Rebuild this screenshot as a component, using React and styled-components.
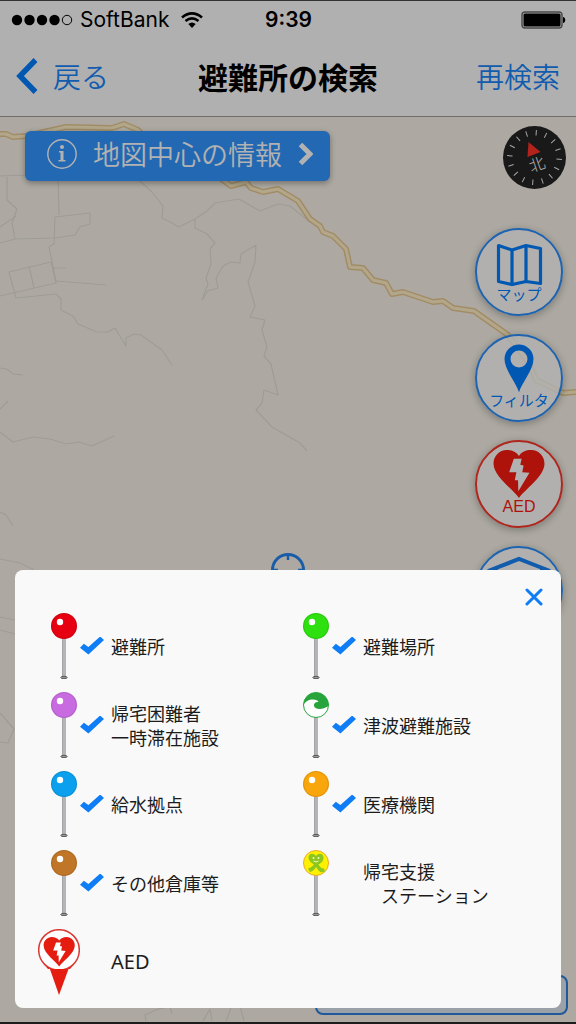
import React from "react";
import styled, { createGlobalStyle } from "styled-components";

const GlobalStyle = createGlobalStyle`
  * {
    box-sizing: border-box;
  }
  body {
    margin: 0;
    font-family: "Noto Sans CJK JP", sans-serif;
    background: #fdfdfd;
  }
  button {
    font-family: inherit;
    border: none;
    background: none;
    padding: 0;
    cursor: pointer;
  }
  svg {
    display: block;
    flex-shrink: 0;
  }
`;

const Screen = styled.div`
  min-height: 100vh;
  display: flex;
  flex-direction: column;
  border-top: 1px solid #4a4a4e;
  border-bottom: 2px solid #2c2a2c;
`;

const Header = styled.header`
  background: #fdfdfd;
  border-bottom: 1px solid #a09e98;
`;

const StatusBar = styled.div`
  display: grid;
  grid-template-columns: 1fr auto 1fr;
  align-items: center;
  height: 38px;
  padding: 0 10px 0 11px;
  font-family: Inter, sans-serif;
  font-size: 21px;
  line-height: 24px;
`;

const Carrier = styled.div`
  display: flex;
  align-items: center;
  gap: 7px;

  svg:last-child {
    margin-left: 5px;
  }
`;

const Clock = styled.time`
  font-weight: 600;
`;

const Battery = styled.div`
  display: flex;
  justify-content: flex-end;
`;

const NavBar = styled.nav`
  display: grid;
  grid-template-columns: 1fr auto 1fr;
  align-items: center;
  height: 77px;
  padding: 0 16px 4px;
`;

const Title = styled.h1`
  margin: 0;
  font-size: 30px;
  font-weight: 700;
  line-height: 40px;
`;

const NavButton = styled.button`
  display: flex;
  align-items: center;
  gap: 15px;
  justify-self: ${(props) => (props.$end ? "end" : "start")};
  color: #1a85fa;
  font-size: 28px;
  font-weight: 350;
  line-height: 40px;
`;

const MapArea = styled.main`
  flex: 1;
  position: relative;
  display: flex;
  flex-direction: column;
  justify-content: space-between;
  background: #f8f3e9;
`;

const MapCanvas = styled.svg`
  position: absolute;
  inset: 0;
  width: 100%;
  height: 100%;
`;

const Reticle = styled.svg`
  position: absolute;
  top: 50%;
  left: 50%;
  transform: translate(-50%, -50%);
`;

const Controls = styled.div`
  position: relative;
  display: flex;
  justify-content: space-between;
  align-items: flex-start;
  padding: 9px 10px 0 25px;
`;

const InfoButton = styled.button`
  display: flex;
  align-items: center;
  gap: 16px;
  height: 50px;
  margin-top: 5px;
  padding: 0 17px 4px 22px;
  border-radius: 6px;
  background: #3395ff;
  box-shadow: 0 2px 6px rgba(0, 0, 0, 0.35);
  color: #fff;
  font-size: 27px;
  font-weight: 350;
  line-height: 40px;
`;

const ControlColumn = styled.div`
  display: flex;
  flex-direction: column;
  align-items: flex-end;
  gap: 39px;
`;

const RoundButtons = styled.div`
  display: flex;
  flex-direction: column;
  gap: 18px;
  padding-right: 3px;
`;

const RoundButton = styled.button`
  display: flex;
  flex-direction: column;
  align-items: center;
  gap: 1px;
  width: 88px;
  height: 88px;
  padding-top: 8px;
  border: 2px solid ${(props) => (props.$red ? "#f8382c" : "#2c8ffb")};
  border-radius: 50%;
  background: rgba(255, 255, 255, 0.8);
  box-shadow: 0 2px 8px rgba(0, 0, 0, 0.3);
  color: ${(props) => (props.$red ? "#f81a10" : "#007fff")};
  font-family: "Liberation Sans", "Noto Sans CJK JP", sans-serif;
  font-size: ${(props) => (props.$red ? "16px" : "15px")};
  font-weight: 400;
  line-height: 16px;
`;

const BottomPanel = styled.div`
  position: relative;
  align-self: flex-end;
  width: 44%;
  height: 40px;
  margin: 0 8px 7px 0;
  border: 2px solid #2f80de;
  border-radius: 8px;
  background: rgba(214, 228, 242, 0.8);
`;

const Backdrop = styled.div`
  position: fixed;
  inset: 0;
  display: flex;
  align-items: flex-end;
  padding: 0 15px 16px;
  background: rgba(0, 0, 0, 0.3);
`;

const Dialog = styled.section`
  width: 100%;
  padding: 16px 19px 7px 23px;
  border-radius: 8px;
  background: #f9f9f9;
`;

const DialogTop = styled.div`
  display: flex;
  justify-content: flex-end;
`;

const CloseButton = styled.button`
  display: flex;
  align-items: flex-end;
  justify-content: center;
  width: 16px;
  height: 20px;
`;

const Legend = styled.ul`
  display: grid;
  grid-template-columns: 1fr 1fr;
  grid-auto-rows: 79px;
  margin: 0;
  padding: 0;
  list-style: none;
`;

const LegendItem = styled.li`
  display: flex;
`;

const LegendLabel = styled.label`
  display: flex;
  align-items: center;
  color: #1c1c1c;
  font-size: ${(props) => (props.$large ? "20px" : "18px")};
  font-family: ${(props) => (props.$large ? '"Noto Sans"' : '"Noto Sans CJK JP"')}, sans-serif;
  line-height: 24px;
  white-space: pre;
  cursor: pointer;
`;

const Check = styled.input`
  appearance: none;
  width: 24px;
  height: 18px;
  margin: 0 7px 0 0;
  clip-path: polygon(0 62%, 16% 40%, 35% 58%, 84% 0, 100% 20%, 35% 100%);
  cursor: pointer;

  &:checked {
    background: #0f7df5;
  }
`;

const HEART =
  "M27 49C22 41 1 27 1 14C1 6 7 0 14.500 0C20 0 24.500 2 27 6C29.500 2 34 0 39.500 0C47 0 53 6 53 14C53 27 32 41 27 49Z";
const BOLT =
  "21.7,9 29.7,9 28.3,15 31.7,15.7 30.3,22.7 37.7,23.3 26.3,42 26,31 22.7,31 24.3,22.7 17,22.7";

const SignalDots = () => (
  <svg width="62" height="12" viewBox="0 0 62 12">
    {[6, 18.5, 31, 43.5].map((x) => (
      <circle key={x} cx={x} cy="6" r="5.2" fill="#000" />
    ))}
    <circle cx="56" cy="6" r="4.7" fill="none" stroke="#000" />
  </svg>
);

const WifiIcon = () => (
  <svg width="22" height="16" viewBox="0 0 22 16" fill="none" stroke="#000" strokeWidth="2.6">
    <path d="M1 5.500Q11-2.700 21 5.500" />
    <path d="M4.500 9Q11 3.800 17.500 9" />
    <path d="M11 16L7.300 12Q11 9 14.700 12Z" fill="#000" stroke="none" />
  </svg>
);

const BatteryIcon = () => (
  <svg width="45" height="18" viewBox="0 0 45 18">
    <rect x="1" y="1" width="40" height="16" rx="3" fill="none" stroke="#666" strokeWidth="1.400" />
    <rect x="2.500" y="2.500" width="37" height="13" rx="1.500" fill="#000" />
    <path d="M42 6C45 6 45 12 42 12Z" fill="#000" />
  </svg>
);

const Compass = () => (
  <svg width="63" height="63" viewBox="-31.5 -31.5 63 63">
    <circle r="31.500" fill="#262524" />
    {Array.from({ length: 16 }, (_, i) => (
      <path key={i} d="M0-22V-27.500" stroke="#eee" transform={`rotate(${4 + i * 22.5})`} />
    ))}
    <path d="M-6-15.500L6-5.500L-7-0.500Z" fill="#ff3328" />
    <text
      x="0"
      y="13"
      textAnchor="middle"
      fontSize="16"
      fontWeight="300"
      fill="#fff"
      transform="rotate(-19)"
    >
      北
    </text>
  </svg>
);

const InfoIcon = () => (
  <svg width="30" height="30" viewBox="0 0 30 30" fill="#fff">
    <circle cx="15" cy="15" r="14.200" fill="none" stroke="#fff" strokeWidth="1.400" />
    <circle cx="15" cy="8" r="2" />
    <path d="M12 12H16.500V21H18.500V22.500H11.500V21H13.500V13.500H12Z" />
  </svg>
);

const MapIcon = () => (
  <svg width="54" height="48" fill="none" stroke="#007fff" strokeWidth="3.200" strokeLinejoin="round">
    <path d="M6.500 7.500L20 12L34 7.500L48.500 10.500V45.500L34 43.500L20 46.500L6.500 43.500Z" />
    <path d="M20 12V46M34 8V43" />
  </svg>
);

const FilterIcon = () => (
  <svg width="54" height="48" fill="#007fff">
    <path
      fillRule="evenodd"
      d="M27 48.500C25 40 12.500 26 12.500 15A14.500 14.500 0 0 1 41.500 15C41.500 26 29 40 27 48.500ZM27 6.500A8.500 8.500 0 1 0 27 23.500A8.500 8.500 0 1 0 27 6.500Z"
    />
  </svg>
);

const HeartIcon = () => (
  <svg width="54" height="48" viewBox="0 0 54 49" fill="#f81a10">
    <path d={HEART} />
    <polygon points={BOLT} fill="#fff" />
  </svg>
);

const HomeIcon = () => (
  <svg width="70" height="48" fill="none" stroke="#1a85fa" strokeWidth="4">
    <path d="M4 15L35 3L66 15M12 13V46H58V13" />
  </svg>
);

const PinStem = () => (
  <>
    <rect x="24.500" y="25" width="3.500" height="39" fill="#b3b5b8" />
    <path d="M24.500 25V64" stroke="#a3a5a8" />
    <ellipse cx="26" cy="64.500" rx="3.200" ry="1.200" fill="#999" stroke="#444" strokeWidth="0.800" />
  </>
);

const PinIcon = ({ type, color }) => {
  if (type === "aed") {
    return (
      <svg width="42" height="66" viewBox="0 0 42 66">
        <path d="M10.500 36H32L21 66Z" fill="#e51c10" />
        <circle cx="21" cy="21" r="20.300" fill="#fff" stroke="#d93a33" strokeWidth="1.500" />
        <path d="M5 34A20 20 0 0 0 37 34L32 40H10Z" fill="#e51c10" />
        <circle cx="21" cy="21" r="18.800" fill="#fff" />
        <g transform="translate(5 8) scale(0.6)">
          <path d={HEART} fill="#e51c10" />
          <polygon points={BOLT} fill="#fff" />
        </g>
      </svg>
    );
  }
  return (
    <svg width="42" height="66" viewBox="0 0 42 66">
      <PinStem />
      {type === "ball" && (
        <>
          <circle cx="26" cy="13" r="13" fill={color} />
          <circle cx="26" cy="13" r="12.500" fill="none" stroke="#000" strokeOpacity="0.120" />
          <circle cx="22" cy="9" r="3.200" fill="#fff" />
        </>
      )}
      {type === "wave" && (
        <>
          <circle cx="26" cy="13" r="12.500" fill="#fff" stroke="#27a53c" />
          <path
            d="M13.500 13C15 9.500 19 7.500 23 7.500C26 7.500 28 8.500 28.500 10C25.500 9.500 23.500 11.500 24 14C25 17.500 32 18.500 38.500 14C39 6 33 0.500 26 0.500C19 0.500 13.500 6 13.500 13Z"
            fill="#27a53c"
          />
        </>
      )}
      {type === "support" && (
        <>
          <circle cx="26" cy="13" r="12.500" fill="#fdf100" stroke="#eba92c" />
          <path
            d="M26 6C23 2 18 4 18.500 8C19 11.500 22 13 24 14.500C22 17 20 18 18 18.500L20 22C23 21.500 25 19 26 17C27.500 19 29 21.500 31 22.500L35 21.500L34 18.500C31.500 18.500 30 17 28.500 14.500C31 13 33.500 11.500 33.500 8C34 4 29 2 26 6Z"
            fill="#8cc61e"
          />
          <circle cx="23.500" cy="8" r="1" fill="#f4f9c0" />
          <circle cx="28.500" cy="8" r="1" fill="#f4f9c0" />
          <path d="M23.500 11Q26 13 28.500 11" fill="none" stroke="#f4f9c0" />
        </>
      )}
    </svg>
  );
};

const mainRoad =
  "M0 134L6 134L13 137L26 136L48 131L66 127L112 128L124 124L138 130L150 142L180 162L207 171L219 177L231 186L246 182L251 188L263 192L278 189L298 201L310 219L320 226L323 232L333 236L346 249L350 267L363 268L373 280L386 283L392 294L403 292L433 302L443 301L453 308L474 311L508 335L529 363L536 380L563 393L576 392";

const paths = [
  "M0 176L57 174L108 176L140 181L152 192L163 206L162 218L170 222L179 227L195 219L207 211L215 203L239 199L260 211L278 204L290 206L300 214L310 222",
  "M7 177V200L17 209L12 223L15 239L55 238L75 235L80 227L90 224V213L55 217L54 244L49 247L56 281L106 285",
  "M58 174L59 215M0 227L16 216M0 243L15 239M53 268H66",
  "M0 296L56 283L51 262L9 272L16 298L56 294L61 299L61 310L73 316L78 324L97 332H108L115 328L126 346V338L134 334L141 335L162 350L172 365",
  "M29 266L34 288M0 368L7 369L13 374L23 375M0 409L8 401M0 432L13 442L33 437L50 439L66 444L79 442L92 446L114 436",
  "M195 219V228L207 234L215 243L210 249L211 264L206 278L208 284L202 300L208 291L218 288L216 278L223 266L231 262L240 263L241 254L256 245L255 262L248 282L255 306L250 317L265 320L262 330L267 347L264 356L271 364L278 395L264 390L262 403L256 410L272 427L300 443L307 451",
  "M0 512L6 515L13 526M0 559L20 563L34 570M0 617L15 620M0 630L15 634M0 713L14 729L8 743L0 742",
  "M146 1021L145 1015L158 1009L170 1007L172 1014M203 1021L210 1009L212 1021M226 1021L231 1008L240 1006L244 1021",
];

const MapDrawing = () => (
  <MapCanvas viewBox="0 117 576 905" preserveAspectRatio="xMidYMid slice">
    <g fill="none" strokeLinejoin="round">
      {paths.map((d) => (
        <path key={d} d={d} stroke="#e3dfd8" strokeWidth="1.200" />
      ))}
      <path d={mainRoad} stroke="#e8c993" strokeWidth="6" />
      <path d={mainRoad} stroke="#fff0c6" strokeWidth="3" />
    </g>
  </MapCanvas>
);

const legend = [
  { label: "避難所", type: "ball", color: "#e60012", checked: true },
  { label: "避難場所", type: "ball", color: "#2ee010", checked: true },
  { label: "帰宅困難者\n一時滞在施設", type: "ball", color: "#c96be0", checked: true },
  { label: "津波避難施設", type: "wave", checked: true },
  { label: "給水拠点", type: "ball", color: "#0aa0ee", checked: true },
  { label: "医療機関", type: "ball", color: "#f9a50c", checked: true },
  { label: "その他倉庫等", type: "ball", color: "#c07628", checked: true },
  { label: "帰宅支援\n　ステーション", type: "support", checked: false },
  { label: "AED", type: "aed", checked: false },
];

const App = () => {
  return (
    <>
      <GlobalStyle />
      <Screen>
        <Header>
          <StatusBar>
            <Carrier>
              <SignalDots />
              <span>SoftBank</span>
              <WifiIcon />
            </Carrier>
            <Clock>9:39</Clock>
            <Battery>
              <BatteryIcon />
            </Battery>
          </StatusBar>
          <NavBar>
            <NavButton>
              <svg width="22" height="36" fill="none" stroke="#007fff" strokeWidth="5.500">
                <path d="M19.500 2L4 18L19.500 34" />
              </svg>
              戻る
            </NavButton>
            <Title>避難所の検索</Title>
            <NavButton $end>再検索</NavButton>
          </NavBar>
        </Header>
        <MapArea>
          <MapDrawing />
          <Reticle width="36" height="36" viewBox="-18 -18 36 36" fill="none" stroke="#2484f0">
            <circle r="15.500" strokeWidth="3" />
            <path d="M0-15V-10M0 15V10M-15 0H-10M15 0H10" strokeWidth="2.500" />
          </Reticle>
          <Controls>
            <InfoButton>
              <InfoIcon />
              地図中心の情報
              <svg width="15" height="24" fill="none" stroke="#fff" strokeWidth="5">
                <path d="M2.500 2.500L12 12L2.500 21.500" />
              </svg>
            </InfoButton>
            <ControlColumn>
              <Compass />
              <RoundButtons>
                <RoundButton>
                  <MapIcon />
                  マップ
                </RoundButton>
                <RoundButton>
                  <FilterIcon />
                  フィルタ
                </RoundButton>
                <RoundButton $red>
                  <HeartIcon />
                  AED
                </RoundButton>
                <RoundButton aria-label="避難施設">
                  <HomeIcon />
                </RoundButton>
              </RoundButtons>
            </ControlColumn>
          </Controls>
          <BottomPanel />
        </MapArea>
      </Screen>
      <Backdrop>
        <Dialog role="dialog" aria-label="フィルタ">
          <DialogTop>
            <CloseButton aria-label="閉じる">
              <svg width="18" height="18" fill="none" stroke="#0f7df5" strokeWidth="3">
                <path d="M2 2L16 16M16 2L2 16" strokeLinecap="round" />
              </svg>
            </CloseButton>
          </DialogTop>
          <Legend>
            {legend.map((item) => (
              <LegendItem key={item.label}>
                <LegendLabel $large={item.type === "aed"}>
                  <PinIcon type={item.type} color={item.color} />
                  <Check type="checkbox" defaultChecked={item.checked} />
                  {item.label}
                </LegendLabel>
              </LegendItem>
            ))}
          </Legend>
        </Dialog>
      </Backdrop>
    </>
  );
};

export default App;
